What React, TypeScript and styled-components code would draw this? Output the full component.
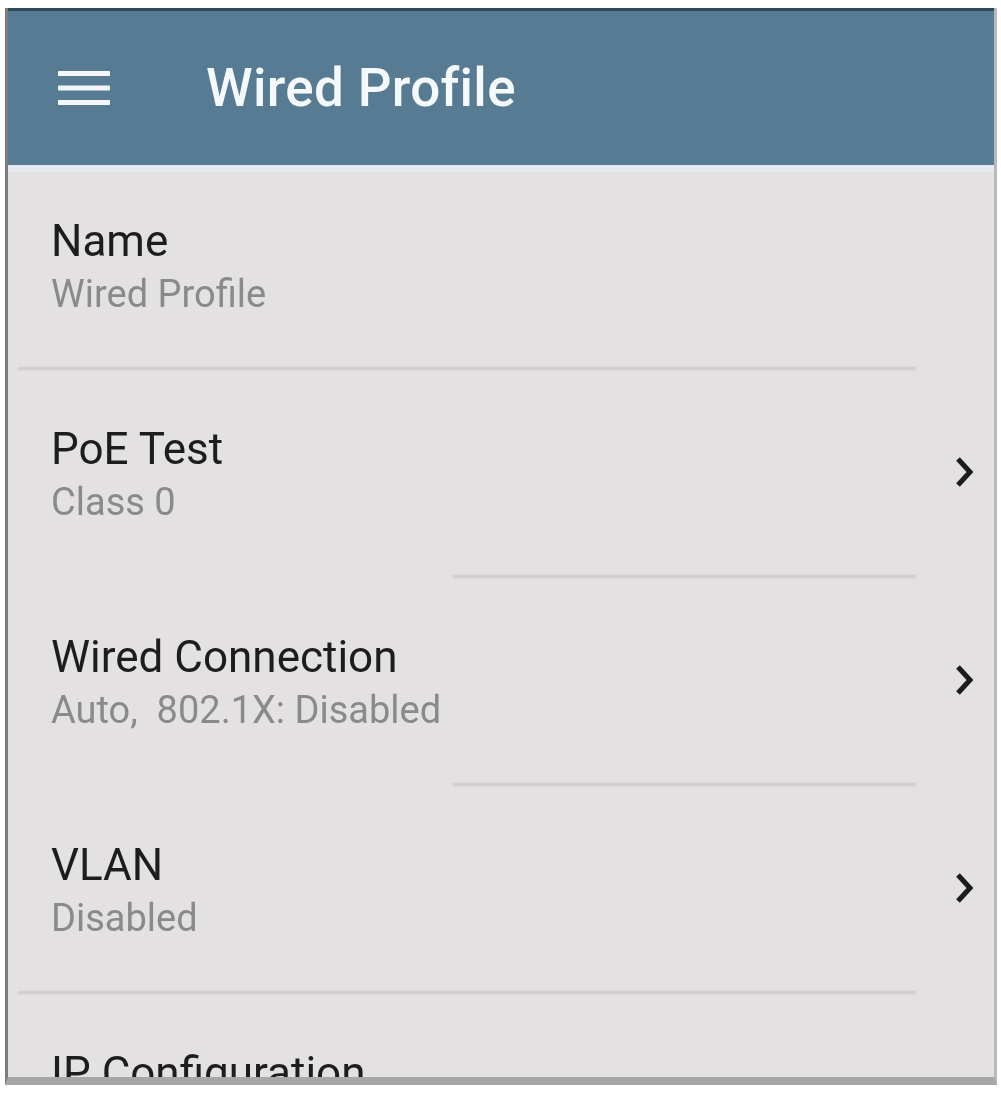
import React from "react";
import styled, { createGlobalStyle } from "styled-components";

const GlobalStyle = createGlobalStyle`
    html, body {
        margin: 0;
        padding: 0;
        background: #ffffff;
        font-family: Roboto, "Liberation Sans", Arial, sans-serif;
    }
`;

type Item = {
    title: string;
    value?: string;
    link?: boolean;
    divider: "full" | "short";
};

const items: Item[] = [
    { title: "Name", value: "Wired Profile", divider: "full" },
    { title: "PoE Test", value: "Class 0", link: true, divider: "short" },
    { title: "Wired Connection", value: "Auto,  802.1X: Disabled", link: true, divider: "short" },
    { title: "VLAN", value: "Disabled", link: true, divider: "full" },
    { title: "IP Configuration", link: true, divider: "short" },
];

const MenuIcon = () => (
    <svg width="52" height="34" viewBox="0 0 52 34">
        <rect x="0" y="0" width="52" height="5" rx="1" fill="#f4f8fb" />
        <rect x="0" y="14.5" width="52" height="5" rx="1" fill="#f4f8fb" />
        <rect x="0" y="29" width="52" height="5" rx="1" fill="#f4f8fb" />
    </svg>
);

const Chevron = () => (
    <svg width="22" height="32" viewBox="0 0 22 32">
        <polyline
            points="4,3 16,16 4,29"
            fill="none"
            stroke="#1c1c1c"
            strokeWidth="5"
            strokeLinejoin="miter"
        />
    </svg>
);

export default function App() {
    return (
        <>
            <GlobalStyle />
            <Frame>
                <Header>
                    <MenuButton>
                        <MenuIcon />
                    </MenuButton>
                    <Title>Wired Profile</Title>
                </Header>
                <List>
                    {items.map((item) => (
                        <React.Fragment key={item.title}>
                            <Row>
                                <Texts>
                                    <Label>{item.title}</Label>
                                    {item.value && <Value>{item.value}</Value>}
                                </Texts>
                                {item.link && item.value && (
                                    <Arrow>
                                        <Chevron />
                                    </Arrow>
                                )}
                            </Row>
                            <Divider $kind={item.divider} />
                        </React.Fragment>
                    ))}
                </List>
            </Frame>
        </>
    );
}

const Frame = styled.div`
    margin: 8px 0 0 5px;
    width: 992px;
    height: 1077px;
    box-sizing: border-box;
    border-left: 3px solid #7d7d7d;
    border-right: 3px solid #b9b9b9;
    border-bottom: 8px solid #a7a7a7;
    background: #e4e1e2;
    overflow: hidden;
    display: flex;
    flex-direction: column;
    filter: blur(0.5px);
`;

const Header = styled.header`
    flex: none;
    height: 164px;
    box-sizing: border-box;
    border-top: 3px solid #2f4a5b;
    border-bottom: 7px solid #e3e9ee;
    background: #587b94;
    display: flex;
    align-items: center;
    padding-left: 50px;
    gap: 96px;
`;

const MenuButton = styled.div`
    display: flex;
    align-items: center;
    width: 52px;
    height: 34px;
`;

const Title = styled.h1`
    margin: 0;
    color: #f6f9fb;
    font-size: 53px;
    font-weight: 500;
    letter-spacing: 0.3px;
`;

const List = styled.div`
    display: flex;
    flex-direction: column;
`;

const Row = styled.div`
    display: flex;
    align-items: center;
    padding: 53px 18px 46px 43px;

    &:first-child {
        padding-top: 43px;
    }
`;

const Texts = styled.div`
    flex: 1;
    display: flex;
    flex-direction: column;
`;

const Label = styled.div`
    color: #1d1d1d;
    font-size: 44px;
    line-height: 52px;
`;

const Value = styled.div`
    color: #8b8a8b;
    font-size: 38px;
    line-height: 54px;
    white-space: pre;
`;

const Arrow = styled.div`
    display: flex;
    align-items: center;
    margin-top: -8px;
`;

const Divider = styled.div<{ $kind: "full" | "short" }>`
    flex: none;
    height: 3px;
    margin-left: ${(p) => (p.$kind === "full" ? "10px" : "445px")};
    margin-right: 78px;
    background: #d2cfd0;
    box-shadow: 0 0 3px #d6d3d4;
`;
